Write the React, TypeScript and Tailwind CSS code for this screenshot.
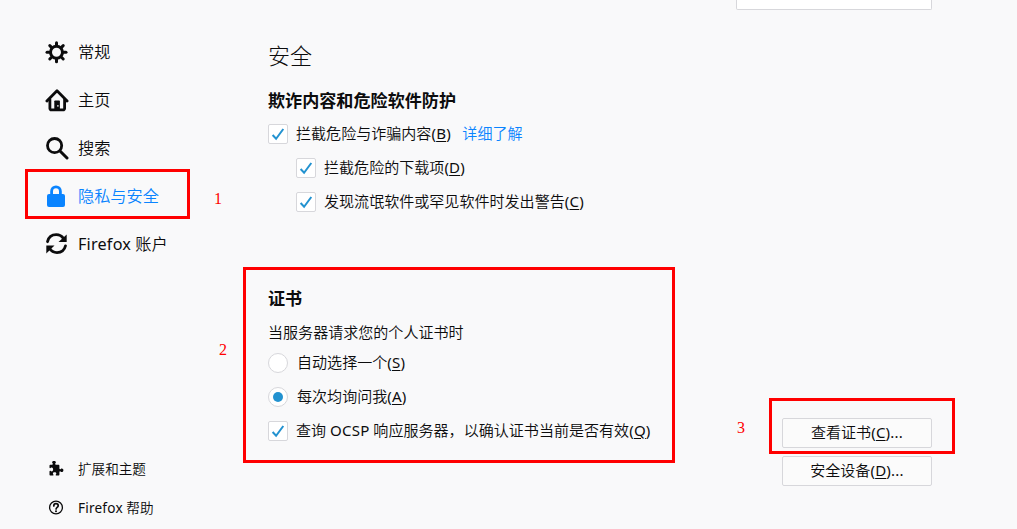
import type { ReactNode } from 'react';
import clsx from 'clsx';

function GearIcon() {
  return (
    <svg width="24" height="24" viewBox="0 0 24 24" fill="none" stroke="currentColor" strokeWidth="3" strokeLinecap="round">
      <circle cx="11.5" cy="12.3" r="6" />
      {[0, 45, 90, 135, 180, 225, 270, 315].map((deg) => (
        <path key={deg} d="M11.5 5.3V2.8" transform={`rotate(${deg} 11.5 12.3)`} />
      ))}
    </svg>
  );
}

function HomeIcon() {
  return (
    <svg width="24" height="24" viewBox="0 0 24 24" fill="none" stroke="currentColor" strokeWidth="2.8" strokeLinecap="round" strokeLinejoin="round">
      <path d="M1.9 13 12 2.8 22.1 13" />
      <path d="M4.9 11.4v9a1.5 1.5 0 0 0 1.5 1.5h11.7a1.5 1.5 0 0 0 1.5-1.5v-9" />
      <path d="M9.3 22v-8.8a.8.8 0 0 1 .8-.8h4a.8.8 0 0 1 .8.8V22z" fill="currentColor" stroke="none" />
      <circle cx="12.9" cy="17.9" r="0.8" fill="#f9f9fa" stroke="none" />
    </svg>
  );
}

function SearchIcon() {
  return (
    <svg width="24" height="24" viewBox="0 0 24 24" fill="none" stroke="currentColor" strokeWidth="2.8" strokeLinecap="round">
      <circle cx="9.6" cy="9.6" r="7.1" />
      <path d="m15 15 7 7" strokeWidth="3" />
    </svg>
  );
}

function LockIcon() {
  return (
    <svg width="24" height="24" viewBox="0 0 24 24" fill="none">
      <path d="M6.6 12V7.2a4.4 4.4 0 0 1 8.8 0V12" stroke="currentColor" strokeWidth="2.8" />
      <rect x="2" y="10" width="18" height="13" rx="2" fill="currentColor" />
    </svg>
  );
}

function SyncIcon() {
  return (
    <svg width="24" height="24" viewBox="0 0 24 24" fill="none" stroke="currentColor" strokeWidth="2.8">
      <path d="M2.5 9.7C3.6 5.3 7 2.7 11.2 2.7c3.2 0 5.8 1.5 7.4 4" strokeLinecap="round" />
      <path d="M21.7 2.4v7.7h-8.2z" fill="currentColor" stroke="none" />
      <path d="M20.5 13.8c-1 4.3-4.3 6.8-8.5 6.8-3.2 0-5.8-1.5-7.4-4" strokeLinecap="round" />
      <path d="M1.3 21.5v-7.9h8.2z" fill="currentColor" stroke="none" />
    </svg>
  );
}

function PuzzleIcon() {
  return (
    <svg width="24" height="16" viewBox="-3.5 0.5 24 16" fill="currentColor">
      <path d="M13.3 8c-.9 0-1 .8-1.7.8-.5 0-.7-.4-.7-1V5.2c0-.6-.4-1-1-1H7.6c-.6 0-1-.2-1-.7 0-.6.8-.8.8-1.7C7.4.9 6.6.4 5.500.4S3.6.9 3.6 1.8c0 .9.8 1.1.8 1.7 0 .5-.4.7-1 .7H2c-.6 0-1 .4-1 1v1.8c0 .5.2.8.7.8.6 0 .7-.7 1.5-.7.9 0 1.4.8 1.4 1.9s-.5 1.9-1.4 1.9c-.8 0-.9-.7-1.5-.7-.5 0-.7.3-.7.8v3c0 .6.4 1 1 1h2.2c.5 0 .8-.2.8-.6 0-.5-.6-.7-.6-1.4 0-.9.7-1.3 1.7-1.3s1.7.4 1.7 1.3c0 .7-.6.9-.6 1.4 0 .4.3.6.8.6h1.9c.6 0 1-.4 1-1v-2.2c0-.6.2-1 .7-1 .6 0 .8.8 1.7.8 1 0 1.6-.7 1.6-1.8S14.3 8 13.3 8z" />
    </svg>
  );
}

function HelpIcon() {
  return (
    <svg width="24" height="16" viewBox="-3 0.5 24 16" fill="none" stroke="currentColor">
      <circle cx="8" cy="8" r="6.4" strokeWidth="1.3" />
      <path d="M5.8 6.4C5.8 5 6.7 4.2 8 4.2s2.2.8 2.2 2c0 1.6-2.1 1.7-2.1 3.3" strokeWidth="1.7" strokeLinecap="round" />
      <circle cx="8" cy="11.8" r="1" fill="currentColor" stroke="none" />
    </svg>
  );
}

// Latin runs sit at regular weight beside the lighter Chinese text
function Latin({ children }: { children: ReactNode }) {
  return <span className="font-normal tracking-[0.2px]">{children}</span>;
}

function Key({ children }: { children: string }) {
  return (
    <Latin>
      (<span className="underline decoration-1 underline-offset-2">{children}</span>)
    </Latin>
  );
}

const CATEGORIES = [
  { id: 'general', label: '常规', icon: <GearIcon /> },
  { id: 'home', label: '主页', icon: <HomeIcon /> },
  { id: 'search', label: '搜索', icon: <SearchIcon /> },
  { id: 'privacy', label: '隐私与安全', icon: <LockIcon />, active: true },
  { id: 'sync', label: <><Latin>Firefox</Latin> 账户</>, icon: <SyncIcon /> },
];

function CheckRow({ children, className }: { children: ReactNode; className?: string }) {
  return (
    <div className={clsx('flex h-[34px] items-center gap-2', className)}>
      <span className="flex size-5 shrink-0 items-center justify-center rounded-xs border border-[#d7d7db] bg-white text-[#2292d0]">
        <svg width="18" height="18" viewBox="0 0 18 18" fill="none" stroke="currentColor" strokeWidth="2">
          <path d="m3.6 10 3.5 3.8L14.3 4" />
        </svg>
      </span>
      <span className="pb-0.5">{children}</span>
    </div>
  );
}

function RadioRow({ children, checked }: { children: ReactNode; checked?: boolean }) {
  return (
    <div className="flex h-[34px] items-center gap-[9px]">
      <span className="flex size-5 shrink-0 items-center justify-center rounded-full border border-[#d7d7db] bg-white">
        {checked && <span className="size-2.5 rounded-full bg-[#2292d0]" />}
      </span>
      <span className="pb-0.5">{children}</span>
    </div>
  );
}

function Button({ children }: { children: ReactNode }) {
  return (
    <button className="h-[30px] w-[150px] rounded-xs border border-[#d7d7db] bg-[#fbfbfb] pb-0.5">{children}</button>
  );
}

export default function App() {
  return (
    <div className="relative flex h-[529px] w-[1017px] overflow-hidden bg-[#f9f9fa] font-['Noto_Sans','Noto_Sans_CJK_SC',sans-serif] text-[15.05px] leading-6 font-[350] whitespace-nowrap text-[#0c0c0d]">
      <aside className="flex w-[268px] shrink-0 flex-col pt-7 pb-0.5 pl-[45px]">
        <nav className="text-[16.2px]">
          {CATEGORIES.map((item) => (
            <div key={item.id} className={clsx('flex h-12 items-center gap-[9px]', item.active && 'text-[#0a84ff]')}>
              {item.icon}
              <span>{item.label}</span>
            </div>
          ))}
        </nav>
        <div className="mt-auto text-[13.6px]">
          <div className="flex h-[39px] items-center gap-[9px]">
            <PuzzleIcon />
            <span>扩展和主题</span>
          </div>
          <div className="flex h-[39px] items-center gap-[9px]">
            <HelpIcon />
            <span>
              <Latin>Firefox</Latin> 帮助
            </span>
          </div>
        </div>
      </aside>

      <main className="flex w-[664px] flex-col">
        <div className="h-2.5 w-[196px] self-end rounded-b-xs border border-t-0 border-[#d7d7db] bg-white" />
        <h1 className="mt-[29px] text-[22px] leading-8 font-light">安全</h1>

        <section className="mt-[18px]">
          <h2 className="text-[17.1px] font-bold">欺诈内容和危险软件防护</h2>
          <div className="mt-1">
            <CheckRow>
              拦截危险与诈骗内容<Key>B</Key>
              <a className="ml-[11.5px] text-[#0a84ff]">详细了解</a>
            </CheckRow>
            <CheckRow className="ml-7">
              拦截危险的下载项<Key>D</Key>
            </CheckRow>
            <CheckRow className="ml-7">
              发现流氓软件或罕见软件时发出警告<Key>C</Key>
            </CheckRow>
          </div>
        </section>

        <section className="mt-[68px]">
          <h2 className="text-[17.1px] font-bold">证书</h2>
          <p className="mt-[9px]">当服务器请求您的个人证书时</p>
          <div className="mt-0.5 flex items-start justify-between">
            <div>
              <RadioRow>
                自动选择一个<Key>S</Key>
              </RadioRow>
              <RadioRow checked>
                每次均询问我<Key>A</Key>
              </RadioRow>
              <CheckRow>
                查询 <Latin>OCSP</Latin> 响应服务器，以确认证书当前是否有效<Key>Q</Key>
              </CheckRow>
            </div>
            <div className="mt-[72px] flex flex-col gap-2">
              <Button>
                查看证书<Key>C</Key>
                <Latin>...</Latin>
              </Button>
              <Button>
                安全设备<Key>D</Key>
                <Latin>...</Latin>
              </Button>
            </div>
          </div>
        </section>
      </main>

      {/* step markers */}
      <div className="absolute top-[169px] left-[25px] h-[50px] w-[165px] border-3 border-[#ff0000]" />
      <div className="absolute top-[267px] left-[243px] h-[196px] w-[432px] border-3 border-[#ff0000]" />
      <div className="absolute top-[398px] left-[769px] h-[56px] w-[186px] border-3 border-[#ff0000]" />
      <div className="font-['Liberation_Serif',serif] text-base text-[#ff0000]">
        <span className="absolute top-[187px] left-[214px]">1</span>
        <span className="absolute top-[338px] left-[219px]">2</span>
        <span className="absolute top-[416px] left-[737px]">3</span>
      </div>
    </div>
  );
}
